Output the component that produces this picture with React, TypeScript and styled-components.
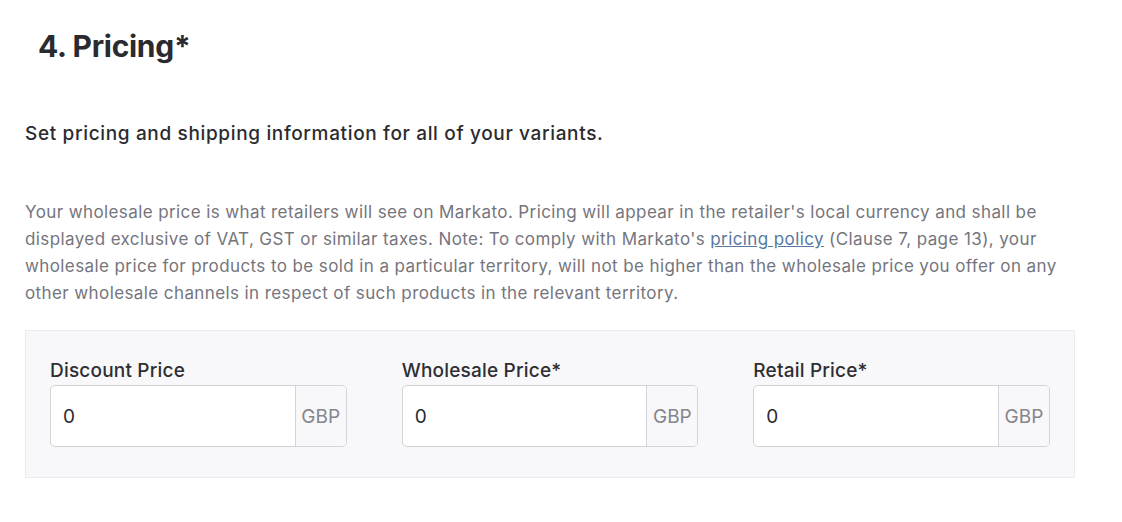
import styled, { createGlobalStyle } from "styled-components";

const GlobalStyle = createGlobalStyle`
  *, *::before, *::after {
    box-sizing: border-box;
  }
  body {
    margin: 0;
    background: #ffffff;
    font-family: Inter, "Liberation Sans", sans-serif;
  }
`;

const Page = styled.div`
  padding: 24px 0 0 25px;
  width: 1075px;
`;

const Title = styled.h2`
  margin: 0 0 0 13px;
  font-size: 30px;
  line-height: 44px;
  letter-spacing: -0.3px;
  font-weight: 700;
  color: #2b2b2f;
`;

const Subtitle = styled.h3`
  margin: 52px 0 0;
  font-size: 19px;
  line-height: 27px;
  letter-spacing: 0.65px;
  font-weight: 500;
  color: #2b2b2f;
`;

const Note = styled.p`
  margin: 52px 0 0;
  font-size: 17px;
  line-height: 27px;
  letter-spacing: 0.4px;
  color: #75757d;
`;

const Link = styled.a`
  color: #56799f;
  text-decoration: underline;
`;

const Panel = styled.div`
  margin-top: 23px;
  background: #f8f8fa;
  border: 1px solid #ebebef;
  padding: 26px 24px 30px;
  display: grid;
  grid-template-columns: repeat(3, minmax(0, 1fr));
  column-gap: 55px;
`;

const Field = styled.div`
  display: flex;
  flex-direction: column;
`;

const Label = styled.label`
  font-size: 19px;
  line-height: 27px;
  letter-spacing: 0.2px;
  font-weight: 500;
  color: #2e2e33;
  margin-bottom: 1px;
`;

const InputGroup = styled.div`
  display: flex;
  height: 62px;
  border: 1px solid #d3d3d8;
  border-radius: 5px;
  overflow: hidden;
  background: #ffffff;
`;

const Input = styled.input`
  flex: 1;
  min-width: 0;
  border: none;
  outline: none;
  padding: 0 12px;
  font-family: inherit;
  font-size: 19px;
  color: #2b2b2f;
  background: transparent;
`;

const Addon = styled.span`
  display: flex;
  align-items: center;
  justify-content: center;
  width: 51px;
  border-left: 1px solid #d3d3d8;
  background: #f8f8fa;
  font-size: 19px;
  color: #85858c;
`;

const fields = ["Discount Price", "Wholesale Price*", "Retail Price*"];

const App = () => {
  return (
    <>
      <GlobalStyle />
      <Page>
        <Title>4. Pricing*</Title>
        <Subtitle>Set pricing and shipping information for all of your variants.</Subtitle>
        <Note>
          Your wholesale price is what retailers will see on Markato. Pricing will appear in the
          retailer's local currency and shall be displayed exclusive of VAT, GST or similar taxes.
          Note: To comply with Markato's <Link href="#">pricing policy</Link> (Clause 7, page 13),
          your wholesale price for products to be sold in a particular territory, will not be higher
          than the wholesale price you offer on any other wholesale channels in respect of such
          products in the relevant territory.
        </Note>
        <Panel>
          {fields.map((label) => (
            <Field key={label}>
              <Label>{label}</Label>
              <InputGroup>
                <Input defaultValue="0" />
                <Addon>GBP</Addon>
              </InputGroup>
            </Field>
          ))}
        </Panel>
      </Page>
    </>
  );
};

export default App;
